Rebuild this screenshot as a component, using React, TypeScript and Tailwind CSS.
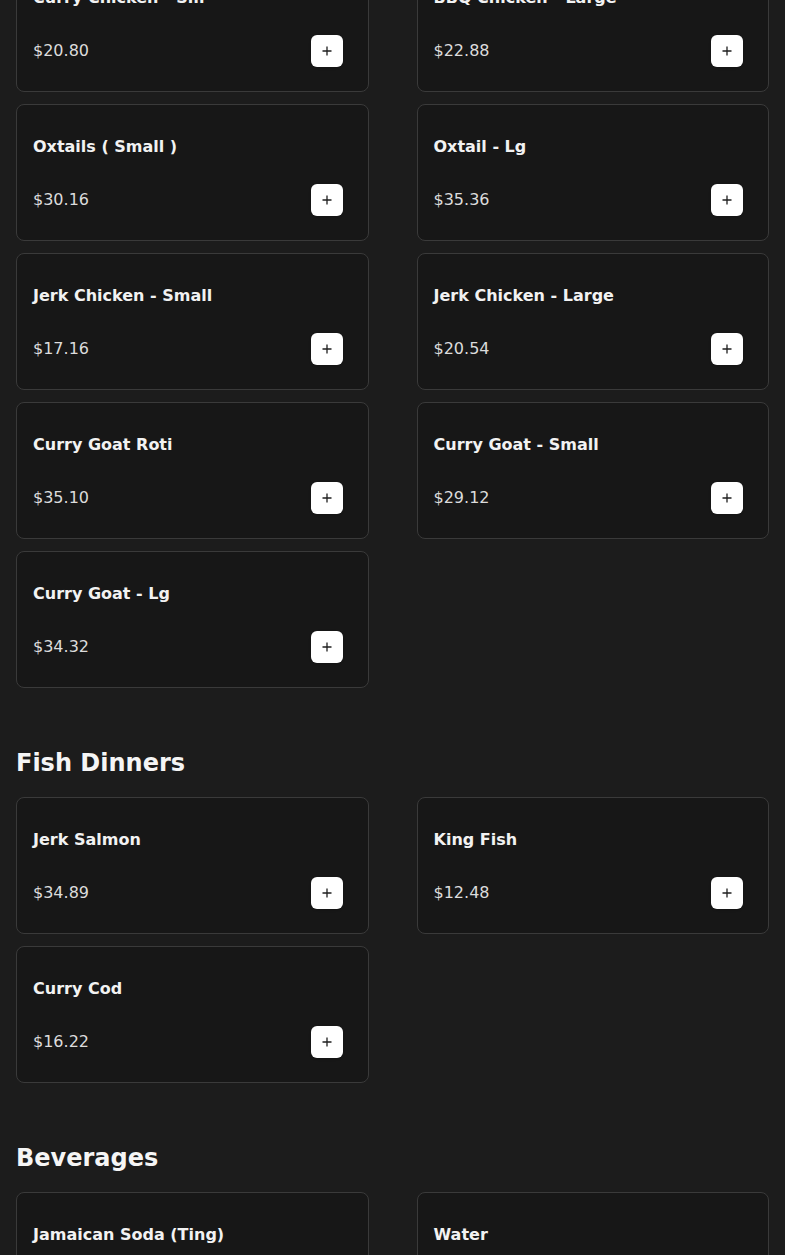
interface MenuItem {
  name: string;
  price: number;
}

interface Category {
  title?: string;
  items: MenuItem[];
}

const categories: Category[] = [
  {
    items: [
      { name: "Curry Chicken - Sm", price: 20.8 },
      { name: "BBQ Chicken - Large", price: 22.88 },
      { name: "Oxtails ( Small )", price: 30.16 },
      { name: "Oxtail - Lg", price: 35.36 },
      { name: "Jerk Chicken - Small", price: 17.16 },
      { name: "Jerk Chicken - Large", price: 20.54 },
      { name: "Curry Goat Roti", price: 35.1 },
      { name: "Curry Goat - Small", price: 29.12 },
      { name: "Curry Goat - Lg", price: 34.32 },
    ],
  },
  {
    title: "Fish Dinners",
    items: [
      { name: "Jerk Salmon", price: 34.89 },
      { name: "King Fish", price: 12.48 },
      { name: "Curry Cod", price: 16.22 },
    ],
  },
  {
    title: "Beverages",
    items: [
      { name: "Jamaican Soda (Ting)", price: 3.12 },
      { name: "Water", price: 2.08 },
    ],
  },
];

function PlusIcon() {
  return (
    <svg width="10" height="10" viewBox="0 0 10 10" fill="none">
      <path d="M5 0.5v9M0.5 5h9" stroke="#1f1f1f" strokeWidth="1.3" />
    </svg>
  );
}

function ItemCard({ item }: { item: MenuItem }) {
  return (
    <div className="flex h-[137px] flex-col rounded-lg border border-[#3a3a3a] bg-[#171717] px-4 pt-[30px] pb-6">
      <h3 className="text-base leading-6 font-bold text-[#f2f2f2]">{item.name}</h3>
      <div className="mt-[25px] flex items-center justify-between">
        <span className="text-base leading-6 text-[#dcdcdc]">${item.price.toFixed(2)}</span>
        <button className="mr-[9px] flex h-8 w-8 items-center justify-center rounded-md bg-white shadow-sm">
          <PlusIcon />
        </button>
      </div>
    </div>
  );
}

export default function App() {
  return (
    <div
      className="min-h-[1255px] overflow-hidden bg-[#1c1c1c] px-4 pb-16"
      style={{ fontFamily: '"DejaVu Sans", "Liberation Sans", sans-serif' }}
    >
      <div className="-mt-[45px] flex flex-col gap-[59px]">
        {categories.map((cat, i) => (
          <section key={i}>
            {cat.title && (
              <h2 className="mb-[18px] text-2xl leading-8 font-bold text-[#f5f5f5]">{cat.title}</h2>
            )}
            <div className="grid grid-cols-2 gap-x-12 gap-y-3">
              {cat.items.map((item) => (
                <ItemCard key={item.name} item={item} />
              ))}
            </div>
          </section>
        ))}
      </div>
    </div>
  );
}
